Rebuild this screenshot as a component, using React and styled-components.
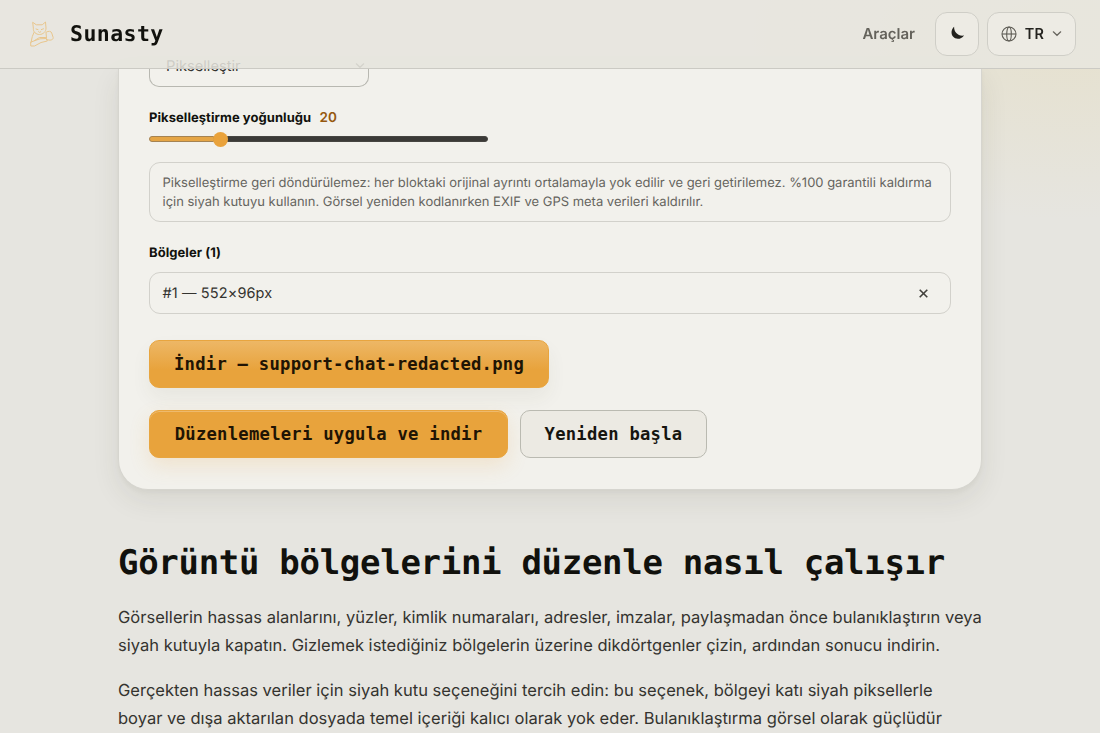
import React from 'react';
import styled, { createGlobalStyle } from 'styled-components';

const sans = '"Inter", "Liberation Sans", sans-serif';
const mono = '"DejaVu Sans Mono", "Liberation Mono", monospace';

const GlobalStyle = createGlobalStyle`
  * {
    box-sizing: border-box;
  }
  html, body {
    margin: 0;
    height: 733px;
    overflow: hidden;
  }
  body {
    font-family: ${sans};
    text-rendering: geometricPrecision;
    color: #11110d;
    background:
      radial-gradient(320px 180px at 1070px 40px, rgba(229, 215, 165, 0.3), rgba(229, 218, 170, 0) 100%),
      #e6e5e0;
  }
`;

const Header = styled.header`
  position: fixed;
  top: 0;
  left: 0;
  right: 0;
  z-index: 5;
  height: 69px;
  padding: 0 24px 1px 28px;
  display: flex;
  align-items: center;
  justify-content: space-between;
  background: rgba(231, 230, 223, 0.85);
  border-bottom: 1px solid #cbcac4;
`;

const Brand = styled.a`
  display: flex;
  align-items: center;
  gap: 14px;
  font-family: ${mono};
  font-size: 21.5px;
  font-weight: 700;
  letter-spacing: 0.45px;
  span {
    padding-top: 2px;
  }
`;

const Nav = styled.nav`
  display: flex;
  align-items: center;
  gap: 8px;
`;

const NavLink = styled.a`
  margin-right: 12px;
  font-size: 15px;
  font-weight: 600;
  color: #64625b;
`;

const HeaderButton = styled.button`
  height: 44px;
  width: ${(props) => props.$width};
  display: flex;
  align-items: center;
  justify-content: center;
  gap: 7.5px;
  padding: 0;
  border: 1px solid #cfcec7;
  border-radius: 12px;
  background: #edebe4;
  font-family: ${sans};
  font-size: 14.4px;
  font-weight: 600;
  letter-spacing: 0.3px;
  color: #24231f;
`;

const Page = styled.main`
  width: 864px;
  margin: 0 auto;
  padding-top: 69px;
`;

const Card = styled.section`
  height: 421px;
  padding: 0 30px;
  border: 1px solid #d6d5cf;
  border-top: 0;
  border-radius: 0 0 30px 30px;
  background: #f2f1ec;
  box-shadow: 0 10px 28px rgba(60, 60, 30, 0.09), 0 2px 5px rgba(60, 60, 30, 0.04);
`;

const Select = styled.div`
  width: 220px;
  height: 18px;
  padding: 0 3px 0 16px;
  display: flex;
  align-items: flex-start;
  justify-content: space-between;
  border: 1px solid #b8b8b1;
  border-top: 0;
  border-radius: 0 0 10px 10px;
  font-size: 14.7px;
  line-height: 20px;
  color: #34332f;
  span {
    margin-top: -13px;
  }
  svg {
    margin-top: -7px;
  }
`;

const FieldLabel = styled.div`
  margin-top: ${(props) => props.$top};
  height: 20px;
  line-height: 22px;
  font-size: 13px;
  font-weight: 700;
  letter-spacing: 0.06px;
  color: #11110d;
`;

const Value = styled.span`
  margin-left: 5px;
  font-weight: 600;
  font-size: 13.5px;
  color: #96590f;
`;

const Slider = styled.div`
  width: 339px;
  height: 16px;
  margin-top: 4px;
  display: flex;
  align-items: center;
`;

const Track = styled.div`
  flex: ${(props) => (props.$filled ? '0 0 65px' : '1')};
  height: 6px;
  border: 1px solid ${(props) => (props.$filled ? '#a58352' : '#464541')};
  background: ${(props) => (props.$filled ? '#e5a545' : '#3b3a37')};
  border-radius: ${(props) => (props.$filled ? '3px 0 0 3px' : '0 3px 3px 0')};
`;

const Thumb = styled.div`
  width: 15px;
  height: 15px;
  margin: 0 -1px;
  z-index: 1;
  border-radius: 50%;
  background: #e9a23b;
`;

const Note = styled.p`
  margin: 15px 0 0;
  height: 60px;
  padding: 11px 12.5px 9px;
  border: 1px solid #d2d1cb;
  border-radius: 11px;
  font-size: 12.98px;
  line-height: 19px;
  color: #65645e;
  white-space: nowrap;
`;

const RegionRow = styled.div`
  height: 42px;
  margin-top: 10px;
  padding: 0 21px 0 12.5px;
  display: flex;
  align-items: center;
  justify-content: space-between;
  border: 1px solid #d2d1cb;
  border-radius: 11px;
  font-size: 14.5px;
  letter-spacing: 0.12px;
  color: #34332f;
`;

const Actions = styled.div`
  display: flex;
  gap: 12px;
  margin-top: ${(props) => props.$top};
`;

const ActionButton = styled.button`
  width: ${(props) => props.$width};
  height: 48px;
  padding: 0;
  border: 1px solid ${(props) => (props.$secondary ? '#babab1' : '#e8a53f')};
  border-radius: 10px;
  font-family: ${mono};
  font-size: 17.2px;
  font-weight: 700;
  letter-spacing: 0.26px;
  white-space: nowrap;
  color: ${(props) => (props.$secondary ? '#161510' : '#201404')};
  background: ${(props) => {
    if (props.$secondary) return '#eceae3';
    if (props.$glossy) return 'linear-gradient(180deg, #edb766 0%, #e8a33c 62%, #e8a33c 100%)';
    return '#e8a33c';
  }};
  box-shadow: ${(props) => {
    if (props.$secondary) return 'none';
    if (props.$glossy) return '0 10px 20px rgba(60, 60, 40, 0.06)';
    return 'inset 0 1px 0 rgba(255, 255, 255, 0.25), 0 8px 20px rgba(232, 163, 60, 0.17)';
  }};
`;

const Title = styled.h2`
  margin: 48px 0 0;
  height: 48px;
  line-height: 50px;
  font-family: ${mono};
  font-size: 34px;
  font-weight: 700;
  letter-spacing: -0.3px;
  white-space: nowrap;
`;

const Paragraph = styled.p`
  margin: ${(props) => props.$top} 0 0;
  font-size: 16.5px;
  line-height: 28px;
  letter-spacing: 0.02px;
  color: #34332f;
  white-space: nowrap;
`;

const CatLogo = () => (
  <svg width="28" height="28" viewBox="0 0 28 28" fill="none" stroke="#e8c48c" strokeWidth="1" strokeLinejoin="round" strokeLinecap="round">
    <path d="M5 2.5 L8.3 4.8 H14.2 L17.5 2 L18 8 C18.3 11.5 15 14.5 11.5 14.5 C8 14.5 5 12 5.3 8.5 Z" />
    <path d="M8 9 L10 9.6 M13.3 9.6 L15.5 8.8 M10.6 11.7 L11.7 12.4 L12.8 11.7" />
    <path d="M6 12.5 L4.3 16.5 L3 22.5 M6.5 20.5 L11.5 17.5 L17.5 17.5 M18 12.5 L18.5 18" />
    <path d="M18.5 12 C20.5 10.8 23.2 11 23.7 13 L25.2 17.5 C25.3 20.2 22 20.8 18.5 19.5" />
    <path d="M3 22 L12 18.8 L18.5 18.5 L19.3 21 L13 22.5 L6.5 26 H3.2 Z" />
  </svg>
);

const Moon = () => (
  <svg width="16" height="16" viewBox="0 0 16 16" fill="#22211d">
    <path d="M5.1 .8 C4.9 6.4 9.2 10.4 15 9.5 C12.3 13.5 6.8 14 4 10.6 C1.7 7.7 2.2 3.3 5.1 .8 Z" />
  </svg>
);

const Globe = () => (
  <svg width="16" height="16" viewBox="0 0 16 16" fill="none" stroke="#5d5b54" strokeWidth="1.1">
    <circle cx="8" cy="8" r="7" />
    <ellipse cx="8" cy="8" rx="2.3" ry="7" />
    <path d="M1 8 H15" />
  </svg>
);

const Chevron = () => (
  <svg width="10" height="7" viewBox="0 0 10 7" fill="none" stroke="#67655e" strokeWidth="1.2" strokeLinecap="round">
    <path d="M1.3 1.8 L5 5.3 L8.7 1.8" />
  </svg>
);

const Close = () => (
  <svg width="11" height="11" viewBox="0 0 11 11" fill="none" stroke="#42413c" strokeWidth="1.6">
    <path d="M1.7 1.7 L9.3 9.3 M9.3 1.7 L1.7 9.3" />
  </svg>
);

const App = () => {
  return (
    <>
      <GlobalStyle />
      <Header>
        <Brand>
          <CatLogo />
          <span>Sunasty</span>
        </Brand>
        <Nav>
          <NavLink>Araçlar</NavLink>
          <HeaderButton $width="44px"><Moon /></HeaderButton>
          <HeaderButton $width="89px">
            <Globe />
            <span>TR</span>
            <Chevron />
          </HeaderButton>
        </Nav>
      </Header>

      <Page>
        <Card>
          <Select>
            <span>Pikselleştir</span>
            <Chevron />
          </Select>
          <FieldLabel $top="20px">
            Pikselleştirme yoğunluğu <Value>20</Value>
          </FieldLabel>
          <Slider>
            <Track $filled />
            <Thumb />
            <Track />
          </Slider>
          <Note>
            Pikselleştirme geri döndürülemez: her bloktaki orijinal ayrıntı ortalamayla yok edilir ve geri getirilemez. %100 garantili kaldırma
            <br />
            için siyah kutuyu kullanın. Görsel yeniden kodlanırken EXIF ve GPS meta verileri kaldırılır.
          </Note>
          <FieldLabel $top="20px">Bölgeler (1)</FieldLabel>
          <RegionRow>
            <span>#1 — 552×96px</span>
            <Close />
          </RegionRow>
          <Actions $top="26px">
            <ActionButton $width="400px" $glossy>İndir — support-chat-redacted.png</ActionButton>
          </Actions>
          <Actions $top="22px">
            <ActionButton $width="359px">Düzenlemeleri uygula ve indir</ActionButton>
            <ActionButton $width="187px" $secondary>Yeniden başla</ActionButton>
          </Actions>
        </Card>

        <Title>Görüntü bölgelerini düzenle nasıl çalışır</Title>
        <Paragraph $top="17px">
          Görsellerin hassas alanlarını, yüzler, kimlik numaraları, adresler, imzalar, paylaşmadan önce bulanıklaştırın veya
          <br />
          siyah kutuyla kapatın. Gizlemek istediğiniz bölgelerin üzerine dikdörtgenler çizin, ardından sonucu indirin.
        </Paragraph>
        <Paragraph $top="17px">
          Gerçekten hassas veriler için siyah kutu seçeneğini tercih edin: bu seçenek, bölgeyi katı siyah piksellerle
          <br />
          boyar ve dışa aktarılan dosyada temel içeriği kalıcı olarak yok eder. Bulanıklaştırma görsel olarak güçlüdür
        </Paragraph>
      </Page>
    </>
  );
};

export default App;
